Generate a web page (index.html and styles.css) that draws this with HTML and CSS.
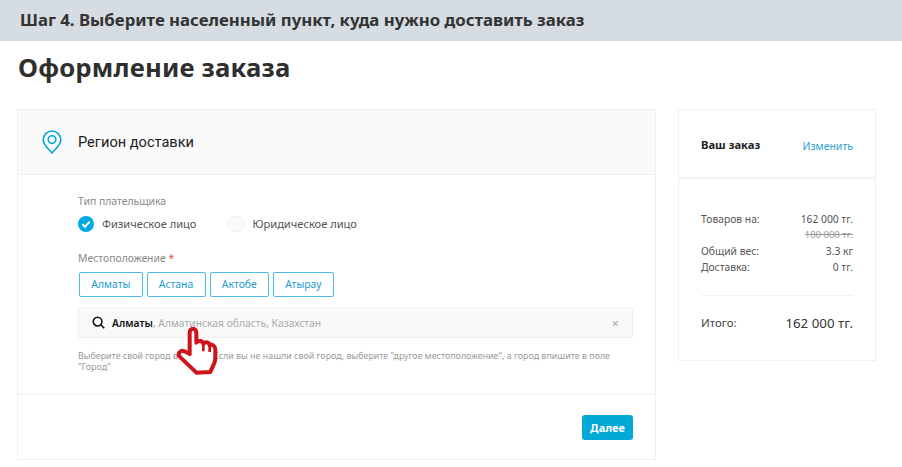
FILE: index.html
```html
<!DOCTYPE html>
<html lang="ru">
<head>
<meta charset="utf-8">
<title>Оформление заказа</title>
<link rel="stylesheet" href="styles.css">
</head>
<body>
<div class="banner">Шаг 4. Выберите населенный пункт, куда нужно доставить заказ</div>
<h1 class="title">Оформление заказа</h1>
<div class="layout">
  <section class="card main">
    <header class="region">
      <svg class="pin" width="20" height="24" viewBox="0 0 20 24" fill="none" stroke="#00a9d6" stroke-width="1.6"><path d="M10 23 C7 19.5 1.2 15 1.2 9.8 A8.8 8.8 0 0 1 18.8 9.8 C18.8 15 13 19.5 10 23 Z"/><circle cx="10" cy="9.6" r="3.8"/></svg>
      <span class="region-title">Регион доставки</span>
    </header>
    <div class="body">
      <div class="label">Тип плательщика</div>
      <div class="radios">
        <span class="radio"><svg class="mark" width="16" height="16" viewBox="0 0 16 16"><circle cx="8" cy="8" r="8" fill="#00a9e0"/><path d="M4.4 8.2 L7 10.8 L11.6 5.6" fill="none" stroke="#fff" stroke-width="2"/></svg>Физическое лицо</span>
        <span class="radio"><span class="mark empty"></span>Юридическое лицо</span>
      </div>
      <div class="label loc">Местоположение <span class="star">*</span></div>
      <div class="cities">
        <span class="city">Алматы</span>
        <span class="city">Астана</span>
        <span class="city">Актобе</span>
        <span class="city">Атырау</span>
      </div>
      <div class="search">
        <svg width="13" height="13" viewBox="0 0 14 14" fill="none" stroke="#111" stroke-width="1.7"><circle cx="6" cy="6" r="4.7"/><path d="M9.4 9.4 L13.2 13.2"/></svg>
        <span class="value"><b>Алматы</b>, Алматинская область, Казахстан</span>
        <span class="clear">×</span>
      </div>
      <p class="hint">Выберите свой город в списке. Если вы не нашли свой город, выберите "другое местоположение", а город впишите в поле "Город"</p>
      <svg class="hand" width="60" height="50" viewBox="0 0 180 150">
        <path d="M56 84 L56 20 C56 4 76 4 76 20 L76 50 C82 42 96 44 97 54 C104 46 115 48 116 58 C124 54 133 60 133 70 L133 96 C133 112 124 122 118 138 L76 140 C60 124 42 108 26 92 C18 82 30 70 40 76 Z" fill="#fff" stroke="#d0121b" stroke-width="12" stroke-linejoin="round"/>
        <path d="M97 54 L97 76 M116 58 L116 78" fill="none" stroke="#d0121b" stroke-width="8"/>
      </svg>
    </div>
    <footer class="actions"><span class="next">Далее</span></footer>
  </section>
  <aside class="card side">
    <div class="side-head"><span class="side-title">Ваш заказ</span><span class="change">Изменить</span></div>
    <div class="side-body">
      <div class="row"><span>Товаров на:</span><span>162 000 тг.</span></div>
      <div class="row old"><span></span><s>180 000 тг.</s></div>
      <div class="row"><span>Общий вес:</span><span>3.3 кг</span></div>
      <div class="row"><span>Доставка:</span><span>0 тг.</span></div>
      <div class="total"><span>Итого:</span><span class="sum">162 000 тг.</span></div>
    </div>
  </aside>
</div>
</body>
</html>
```
FILE: styles.css
```css
* { box-sizing: border-box; }
html, body { margin: 0; padding: 0; }
body { width: 902px; height: 467px; overflow: hidden; background: #fff; font-family: "Noto Sans", "Open Sans", sans-serif; color: #333; }
.banner { height: 41px; background: #d5dce2; padding: 9px 0 0 20px; font-size: 16.8px; line-height: 22px; font-weight: 700; color: #333; white-space: nowrap; }
.title { margin: 0; padding: 8px 0 0 18px; height: 68px; font-size: 25.7px; line-height: 38px; font-weight: 700; color: #2f2f2f; letter-spacing: .2px; }
.layout { display: flex; gap: 22px; padding-left: 17px; align-items: flex-start; }
.card { border: 1px solid #f1f1f1; background: #fff; }
.main { width: 639px; height: 351px; display: flex; flex-direction: column; }
.region { height: 65px; background: #fafafa; border-bottom: 1px solid #f1f1f1; display: flex; align-items: center; padding-left: 24px; gap: 16px; }
.region-title { font-family: "Roboto", sans-serif; font-size: 14.6px; color: #222; }
.body { position: relative; flex: 1; padding: 19px 22px 0 60px; }
.label { font-size: 10.4px; line-height: 14px; color: #888; }
.radios { display: flex; gap: 32px; margin-top: 8px; }
.radio { display: flex; align-items: center; gap: 8px; font-size: 11.1px; line-height: 16px; color: #555; }
.mark { display: block; width: 16px; height: 16px; }
.empty { border: 1px solid #eee; border-radius: 50%; background: #fbfbfb; }
.loc { margin-top: 19px; }
.star { color: #d9534f; }
.cities { display: flex; gap: 4px; margin-top: 7px; padding-left: 1px; }
.city { height: 25px; border: 1.5px solid #4bbde8; border-radius: 2px; padding: 0 11.25px; font-size: 10.4px; line-height: 22px; color: #1b9ccf; }
.search { height: 31px; margin-top: 10px; background: #f9f9f9; border: 1px solid #f0f0f0; border-radius: 2px; display: flex; align-items: center; padding: 0 13px; gap: 7px; }
.value { flex: 1; font-size: 10.3px; color: #aaa; }
.value b { font-weight: 600; color: #111; }
.clear { font-size: 13px; line-height: 14px; color: #aaa; }
.hint { margin: 12px 0 0; font-size: 8.9px; line-height: 11px; color: #999; }
.hand { position: absolute; left: 153px; top: 151px; }
.actions { height: 65px; border-top: 1px solid #f1f1f1; display: flex; justify-content: flex-end; align-items: center; padding-right: 22px; }
.next { width: 51px; height: 25px; background: #00a9d6; border-radius: 3px; color: #fff; font-size: 11px; font-weight: 700; line-height: 25px; text-align: center; }
.side { width: 198px; height: 252px; }
.side-head { height: 69px; border-bottom: 2px solid #f3f3f3; display: flex; justify-content: space-between; align-items: center; padding: 4px 22px 0; }
.side-title { font-size: 11.2px; font-weight: 700; color: #222; margin-top: -3px; }
.change { font-size: 10.5px; color: #2e9fd0; }
.side-body { padding: 32px 22px 0; }
.row { display: flex; justify-content: space-between; font-size: 10.3px; line-height: 16px; color: #555; }
.row.old { color: #999; font-size: 9.5px; }
.total { display: flex; justify-content: space-between; align-items: center; margin-top: 20px; padding-top: 16px; border-top: 1px solid #f3f3f3; font-size: 11.5px; color: #444; line-height: 22px; }
.sum { font-size: 13.3px; color: #333; }
```
